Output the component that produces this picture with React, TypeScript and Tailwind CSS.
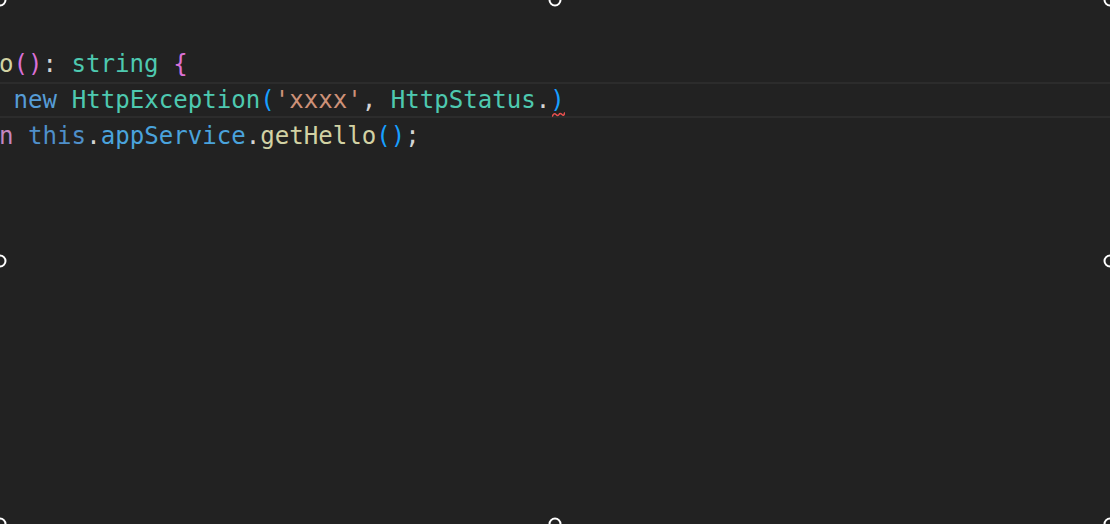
import React from 'react';

type Tok = { t: string; c: string };

const C = {
  plain: '#d4d4d4',
  fn: '#d2d2a4',
  type: '#4ec9b0',
  kw: '#4f8fca',
  ctrl: '#c586c0',
  str: '#ce9178',
  prop: '#4aa3dc',
  b2: '#da70d6',
  b3: '#179fff',
};

const lines: Tok[][] = [
  [
    { t: '  ', c: C.plain },
    { t: 'getHello', c: C.fn },
    { t: '()', c: C.b2 },
    { t: ': ', c: C.plain },
    { t: 'string', c: C.type },
    { t: ' ', c: C.plain },
    { t: '{', c: C.b2 },
  ],
  [
    { t: '    ', c: C.plain },
    { t: 'throw', c: C.ctrl },
    { t: ' ', c: C.plain },
    { t: 'new', c: '#569cd6' },
    { t: ' ', c: C.plain },
    { t: 'HttpException', c: C.type },
    { t: '(', c: C.b3 },
    { t: "'xxxx'", c: C.str },
    { t: ', ', c: C.plain },
    { t: 'HttpStatus', c: C.type },
    { t: '.', c: C.plain },
  ],
  [
    { t: '    ', c: C.plain },
    { t: 'return', c: C.ctrl },
    { t: ' ', c: C.plain },
    { t: 'this', c: C.kw },
    { t: '.', c: C.plain },
    { t: 'appService', c: C.prop },
    { t: '.', c: C.plain },
    { t: 'getHello', c: C.fn },
    { t: '()', c: C.b3 },
    { t: ';', c: C.plain },
  ],
];

// resize handles sitting on the frame edges
const Handle: React.FC<{ className: string }> = ({ className }) => (
  <div
    className={`absolute w-[13px] h-[13px] rounded-full border-2 border-white bg-[#222222] -translate-x-1/2 -translate-y-1/2 ${className}`}
  />
);

const Squiggle = () => (
  <svg className="absolute left-[2px] top-[27px] w-[13px] h-[7px]" viewBox="0 0 13 7" fill="none">
    <path d="M0.5 5 Q2 1.5 4 3.5 T7 3.5 T10 3.5 T12.5 2" stroke="#e8504f" strokeWidth="1.6" strokeLinecap="round" />
  </svg>
);

const Line: React.FC<{ toks: Tok[]; children?: React.ReactNode; current?: boolean }> = ({ toks, children, current }) => (
  <div
    className={
      current
        ? 'h-[36px] leading-[32px] border-y-2 border-[#2c2c2c] whitespace-pre'
        : 'h-[36px] leading-[36px] whitespace-pre'
    }
  >
    {toks.map((k, i) => (
      <span key={i} style={{ color: k.c }}>{k.t}</span>
    ))}
    {children}
  </div>
);

const App: React.FC = () => {
  return (
    <div className="relative w-[1110px] h-[524px] overflow-hidden bg-[#222222] font-['DejaVu_Sans_Mono',monospace] text-[24.1px]">
      <div className="flex flex-col pt-[46px] ml-[-131.5px]">
        <Line toks={lines[0]} />
        <Line toks={lines[1]} current>
          <span className="relative inline-block text-[#179fff]">
            )
            <Squiggle />
          </span>
        </Line>
        <Line toks={lines[2]} />
      </div>

      <Handle className="left-0 top-0" />
      <Handle className="left-[555px] top-0" />
      <Handle className="left-[1110px] top-0" />
      <Handle className="left-0 top-[261px]" />
      <Handle className="left-[1110px] top-[261px]" />
      <Handle className="left-0 top-[524px]" />
      <Handle className="left-[555px] top-[524px]" />
      <Handle className="left-[1110px] top-[524px]" />
    </div>
  );
};

export default App;
